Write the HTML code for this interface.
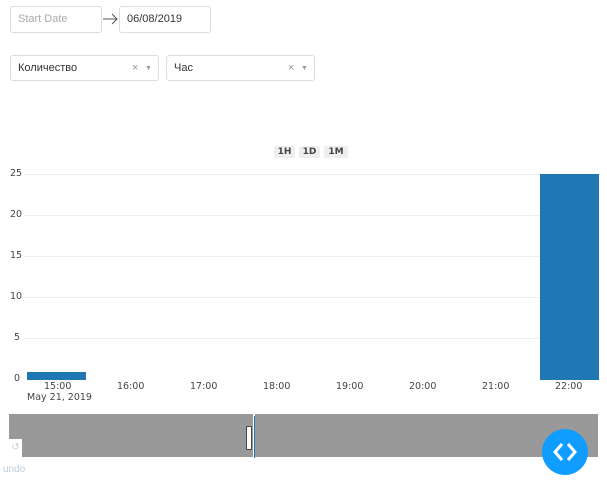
<!DOCTYPE html><html><head><meta charset="utf-8"><style>
body{margin:0;width:607px;height:480px;background:#fff;font-family:"Liberation Sans",sans-serif;position:relative;overflow:hidden}
.a{position:absolute}
.box{position:absolute;border:1px solid #ddd;border-radius:3px;box-sizing:border-box;font-size:11px;line-height:25px;padding-left:7px;color:#333}
.t{position:absolute;font-size:9.5px;color:#444;font-family:"DejaVu Sans","Liberation Sans",sans-serif}
.btn{position:absolute;top:146px;height:12px;background:#eee;border-radius:2px;font:bold 9px "DejaVu Sans",sans-serif;color:#444;text-align:center;line-height:12px}
.g{position:absolute;left:24px;width:576px;height:1px;background:#eee}
</style></head><body>
<div class="box" style="left:10px;top:6px;width:92px;height:27px;color:#aaa">Start Date</div>
<svg class="a" style="left:102px;top:12px" width="17" height="14"><path d="M1 7h14M10 2l5 5-5 5" stroke="#555" stroke-width="1" fill="none"/></svg>
<div class="box" style="left:119px;top:6px;width:92px;height:27px">06/08/2019</div>
<div class="box" style="left:10px;top:55px;width:149px;height:26px">Количество<span class="a" style="left:121px;color:#999">×</span><span class="a" style="left:134px;top:0;font-size:7px;color:#999">▼</span></div>
<div class="box" style="left:166px;top:55px;width:149px;height:26px">Час<span class="a" style="left:121px;color:#999">×</span><span class="a" style="left:134px;top:0;font-size:7px;color:#999">▼</span></div>
<div class="btn" style="left:274px;width:21px">1H</div>
<div class="btn" style="left:299px;width:21px">1D</div>
<div class="btn" style="left:324px;width:24px">1M</div>
<div class="g" style="top:174px"></div><div class="g" style="top:215px"></div><div class="g" style="top:256px"></div><div class="g" style="top:297px"></div><div class="g" style="top:338px"></div>
<div class="t" style="left:10px;top:168px">25</div><div class="t" style="left:10px;top:209px">20</div><div class="t" style="left:10px;top:250px">15</div><div class="t" style="left:10px;top:291px">10</div><div class="t" style="left:14px;top:332px">5</div><div class="t" style="left:14px;top:373px">0</div>
<div class="a" style="left:27px;top:372px;width:59px;height:8px;background:#1f77b4"></div>
<div class="a" style="left:540px;top:174px;width:59px;height:206px;background:#1f77b4"></div>
<div class="t" style="left:44px;top:381px">15:00</div><div class="t" style="left:117px;top:381px">16:00</div><div class="t" style="left:190px;top:381px">17:00</div><div class="t" style="left:263px;top:381px">18:00</div><div class="t" style="left:336px;top:381px">19:00</div><div class="t" style="left:409px;top:381px">20:00</div><div class="t" style="left:482px;top:381px">21:00</div><div class="t" style="left:555px;top:381px">22:00</div>
<div class="t" style="left:27px;top:392px">May 21, 2019</div>
<div class="a" style="left:9px;top:414px;width:589px;height:43px;background:#999"></div>
<div class="a" style="left:253px;top:414px;width:2px;height:44px;background:#fff"></div>
<div class="a" style="left:254px;top:416px;width:1px;height:42px;background:#1f77b4"></div>
<div class="a" style="left:246px;top:426px;width:4px;height:22px;background:#fff;border:1px solid #444;border-radius:1px"></div>
<div class="a" style="left:9px;top:439px;width:13px;height:18px;background:#fff;color:#ccd;font-size:10px;text-align:center;line-height:18px">↺</div>
<div class="a" style="left:3px;top:464px;font-size:10px;color:#bcd">undo</div>
<div class="a" style="left:542px;top:429px;width:46px;height:46px;border-radius:50%;background:#119dff"></div>
<svg class="a" style="left:542px;top:429px" width="46" height="46"><path d="M20 15l-7 8 7 8M26 15l7 8-7 8" stroke="#fff" stroke-width="3" fill="none"/></svg>
</body></html>
